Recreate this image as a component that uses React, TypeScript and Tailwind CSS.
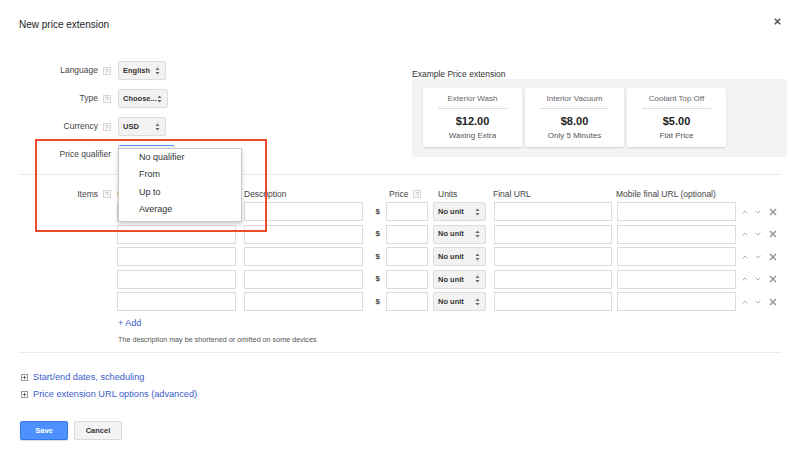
import React from "react";

const HelpBox = () => (
  <span className="inline-flex items-center justify-center w-[8px] h-[8px] border border-[#d6d6d6] bg-[#f7f7f7] text-[6px] leading-none text-[#aaa]">?</span>
);

const Arrows = () => (
  <svg width="5" height="8" viewBox="0 0 5 8">
    <path d="M2.5 0.6 L4.5 3.1 H0.5Z M2.5 7.4 L4.5 4.9 H0.5Z" fill="#666" />
  </svg>
);

const FakeSelect = ({ value, className }: { value: string; className: string }) => (
  <div className={`flex items-center justify-between h-[19px] pl-[4px] pr-[5px] border border-[#dcdcdc] rounded-[2px] bg-[#f2f2f2] text-[7.5px] font-bold text-[#333] ${className}`}>
    <span>{value}</span>
    <Arrows />
  </div>
);

const FormRow = ({ label, help = true, children }: { label: string; help?: boolean; children: React.ReactNode }) => (
  <div className="flex items-center h-[19px]">
    <div className="w-[92px] flex items-center justify-end gap-[5px] text-[8.5px] leading-none text-[#444]">
      <span>{label}</span>
      {help && <HelpBox />}
    </div>
    <div className="ml-[7px]">{children}</div>
  </div>
);

const cards = [
  { title: "Exterior Wash", price: "$12.00", sub: "Waxing Extra" },
  { title: "Interior Vacuum", price: "$8.00", sub: "Only 5 Minutes" },
  { title: "Coolant Top Off", price: "$5.00", sub: "Flat Price" },
];

const Input = ({ className }: { className: string }) => (
  <div className={`h-[19px] border border-[#dcdcdc] bg-white ${className}`} />
);

const ItemRow = () => (
  <div className="flex items-center h-[19px]">
    <Input className="w-[119px]" />
    <Input className="w-[119px] ml-[8px]" />
    <span className="w-[23px] pr-[6px] text-right text-[8px] font-bold text-[#444]">$</span>
    <Input className="w-[42px]" />
    <FakeSelect value="No unit" className="w-[53px] ml-[5px]" />
    <Input className="w-[118px] ml-[8px]" />
    <Input className="w-[119px] ml-[5px]" />
    <div className="flex items-center ml-[6px]">
      <svg width="6" height="4" viewBox="0 0 6 4">
        <polyline points="0.5,3.5 3,1 5.5,3.5" fill="none" stroke="#b0b0b0" strokeWidth="1" />
      </svg>
      <svg width="6" height="4" viewBox="0 0 6 4" className="ml-[7px]">
        <polyline points="0.5,0.5 3,3 5.5,0.5" fill="none" stroke="#b0b0b0" strokeWidth="1" />
      </svg>
      <svg width="8" height="8" viewBox="0 0 8 8" className="ml-[8px]">
        <path d="M1 1 L7 7 M7 1 L1 7" stroke="#999" strokeWidth="1.6" />
      </svg>
    </div>
  </div>
);

const PlusBox = () => (
  <svg width="7" height="7" viewBox="0 0 7 7">
    <rect x="0.5" y="0.5" width="6" height="6" fill="#fff" stroke="#999" />
    <path d="M3.5 1.8 V5.2 M1.8 3.5 H5.2" stroke="#666" strokeWidth="1" />
  </svg>
);

export default function App() {
  return (
    <div className="relative w-[800px] h-[460px] bg-white overflow-hidden font-['Liberation_Sans',Arial,sans-serif]">
      {/* header */}
      <div className="px-[19px] pt-[20px] text-[10px] leading-[10px] text-[#222]">New price extension</div>
      <svg width="7" height="7" viewBox="0 0 7 7" className="absolute left-[774px] top-[18px]">
        <path d="M0.8 0.8 L6.2 6.2 M6.2 0.8 L0.8 6.2" stroke="#555" strokeWidth="1.6" />
      </svg>

      {/* top settings + example */}
      <div className="flex mt-[31px] pl-[19px]">
        <div className="w-[393px] flex flex-col gap-[9px]">
          <FormRow label="Language">
            <FakeSelect value="English" className="w-[48px]" />
          </FormRow>
          <FormRow label="Type">
            <FakeSelect value="Choose..." className="w-[50px]" />
          </FormRow>
          <FormRow label="Currency">
            <FakeSelect value="USD" className="w-[48px]" />
          </FormRow>
          <FormRow label="Price qualifier" help={false}>
            <div className="w-[57px] h-[19px] border border-[#dcdcdc] border-t-[#4d90fe] rounded-[2px] bg-[#f2f2f2]" />
          </FormRow>
        </div>
        <div className="w-[375px] mt-[8px]">
          <div className="text-[8.5px] leading-[10px] text-[#333]">Example Price extension</div>
          <div className="h-[78px] bg-[#f3f3f3] pt-[9px] pl-[11px] flex gap-[3px]">
            {cards.map((c) => (
              <div key={c.title} className="w-[99px] h-[59px] bg-white rounded-[2px] shadow-[0_1px_2px_rgba(0,0,0,0.15)] flex flex-col items-center">
                <div className="mt-[6px] text-[8px] leading-[9px] text-[#666]">{c.title}</div>
                <div className="mt-[5px] w-[69px] border-t border-[#dedede]" />
                <div className="mt-[6px] text-[11px] leading-[12px] font-bold text-[#222]">{c.price}</div>
                <div className="mt-[4px] text-[8px] leading-[9px] text-[#555]">{c.sub}</div>
              </div>
            ))}
          </div>
        </div>
      </div>

      <div className="mx-[19px] mt-[10px] border-t border-[#ebebeb]" />

      {/* items */}
      <div className="pl-[19px] mt-[14px]">
        <div className="flex items-center h-[10px] text-[8.5px] leading-none text-[#444]">
          <div className="w-[92px] flex items-center justify-end gap-[5px]">
            <span>Items</span>
            <HelpBox />
          </div>
          <div className="ml-[6px] w-[127px]">Item header</div>
          <div className="w-[145px]">Description</div>
          <div className="w-[49px] flex items-center gap-[5px]">
            <span>Price</span>
            <HelpBox />
          </div>
          <div className="w-[55px]">Units</div>
          <div className="w-[123px]">Final URL</div>
          <div>Mobile final URL (optional)</div>
        </div>
        <div className="ml-[98px] mt-[3px] flex flex-col gap-[3.6px]">
          <ItemRow />
          <ItemRow />
          <ItemRow />
          <ItemRow />
          <ItemRow />
        </div>
        <div className="ml-[99px] mt-[7px] text-[9px] leading-[10px] text-[#3b5bcc]">+ Add</div>
        <div className="ml-[99px] mt-[7px] text-[7.2px] leading-[9px] text-[#555]">The description may be shortened or omitted on some devices</div>
      </div>

      <div className="mx-[19px] mt-[8px] border-t border-[#ebebeb]" />

      {/* expanders */}
      <div className="pl-[21px] mt-[19px] flex flex-col gap-[6px] text-[9.2px] leading-[11px] text-[#3b5bcc]">
        <div className="flex items-center gap-[5px]">
          <PlusBox />
          <span>Start/end dates, scheduling</span>
        </div>
        <div className="flex items-center gap-[5px]">
          <PlusBox />
          <span>Price extension URL options (advanced)</span>
        </div>
      </div>

      {/* buttons */}
      <div className="pl-[20px] mt-[21px] flex gap-[6px]">
        <button className="w-[48px] h-[19px] rounded-[2px] bg-[#4d90fe] border border-[#3079ed] text-white text-[7.5px] font-bold shadow-[0_1px_1px_rgba(0,0,0,0.15)]">Save</button>
        <button className="w-[48px] h-[19px] rounded-[2px] bg-[#f3f3f3] border border-[#d9d9d9] text-[#333] text-[7.5px] font-bold">Cancel</button>
      </div>

      {/* open dropdown */}
      <div className="absolute left-[118px] top-[148px] w-[124px] h-[74px] bg-white border border-[#c8c8c8] shadow-[0_2px_4px_rgba(0,0,0,0.2)] text-[9px] text-[#333]">
        {["No qualifier", "From", "Up to", "Average"].map((o) => (
          <div key={o} className="h-[17.4px] flex items-center pl-[20px]">{o}</div>
        ))}
      </div>

      {/* annotation */}
      <div className="absolute left-[35px] top-[139px] w-[232px] h-[93px] border-2 border-[#ec4a2f]" />
    </div>
  );
}
